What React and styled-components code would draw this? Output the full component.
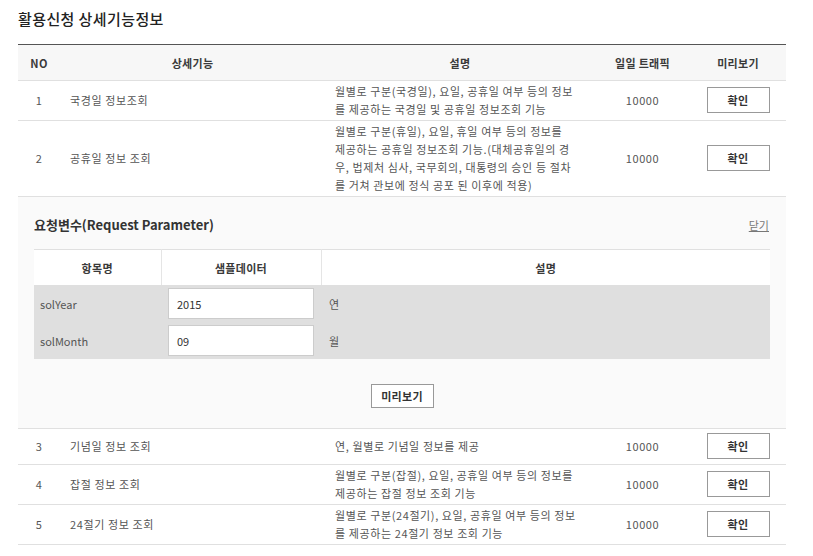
import styled, { createGlobalStyle } from "styled-components";

const GlobalStyle = createGlobalStyle`
  body {
    margin: 0;
    background: #fff;
    font-family: "Noto Sans CJK KR", "Noto Sans", sans-serif;
    color: #555;
  }
`;

const features = [
  {
    no: 1,
    name: "국경일 정보조회",
    desc: [
      "월별로 구분(국경일), 요일, 공휴일 여부 등의 정보",
      "를 제공하는 국경일 및 공휴일 정보조회 기능",
    ],
  },
  {
    no: 2,
    name: "공휴일 정보 조회",
    desc: [
      "월별로 구분(휴일), 요일, 휴일 여부 등의 정보를",
      "제공하는 공휴일 정보조회 기능.(대체공휴일의 경",
      "우, 법제처 심사, 국무회의, 대통령의 승인 등 절차",
      "를 거쳐 관보에 정식 공포 된 이후에 적용)",
    ],
    open: true,
  },
  { no: 3, name: "기념일 정보 조회", desc: ["연, 월별로 기념일 정보를 제공"] },
  {
    no: 4,
    name: "잡절 정보 조회",
    desc: [
      "월별로 구분(잡절), 요일, 공휴일 여부 등의 정보를",
      "제공하는 잡절 정보 조회 기능",
    ],
  },
  {
    no: 5,
    name: "24절기 정보 조회",
    desc: [
      "월별로 구분(24절기), 요일, 공휴일 여부 등의 정보",
      "를 제공하는 24절기 정보 조회 기능",
    ],
  },
];

const params = [
  { name: "solYear", value: "2015", desc: "연" },
  { name: "solMonth", value: "09", desc: "월" },
];

export default function App() {
  return (
    <>
      <GlobalStyle />
      <Page>
        <Title>활용신청 상세기능정보</Title>
        <FeatureTable>
          <colgroup>
            <col style={{ width: 42 }} />
            <col style={{ width: 265 }} />
            <col style={{ width: 270 }} />
            <col style={{ width: 95 }} />
            <col style={{ width: 96 }} />
          </colgroup>
          <thead>
            <tr>
              <HeadCell>NO</HeadCell>
              <HeadCell>상세기능</HeadCell>
              <HeadCell>설명</HeadCell>
              <HeadCell>일일 트래픽</HeadCell>
              <HeadCell>미리보기</HeadCell>
            </tr>
          </thead>
          <tbody>
            {features.map((f) => (
              <FeatureRows key={f.no} feature={f} />
            ))}
          </tbody>
        </FeatureTable>
      </Page>
    </>
  );
}

function FeatureRows({ feature }) {
  return (
    <>
      <tr>
        <Cell $align="center">{feature.no}</Cell>
        <Cell>{feature.name}</Cell>
        <Cell>
          {feature.desc.map((line, i) => (
            <DescLine key={i}>{line}</DescLine>
          ))}
        </Cell>
        <Cell $align="center">10000</Cell>
        <Cell $align="center">
          <Button type="button">확인</Button>
        </Cell>
      </tr>
      {feature.open && (
        <tr>
          <PanelCell colSpan={5}>
            <PanelHead>
              <PanelTitle>요청변수(Request Parameter)</PanelTitle>
              <CloseLink href="#">닫기</CloseLink>
            </PanelHead>
            <ParamTable>
              <colgroup>
                <col style={{ width: 127 }} />
                <col style={{ width: 160 }} />
                <col />
              </colgroup>
              <thead>
                <tr>
                  <ParamHead>항목명</ParamHead>
                  <ParamHead>샘플데이터</ParamHead>
                  <ParamHead>설명</ParamHead>
                </tr>
              </thead>
              <tbody>
                {params.map((p) => (
                  <tr key={p.name}>
                    <ParamCell $pad={6}>{p.name}</ParamCell>
                    <ParamCell $pad={7}>
                      <ParamInput defaultValue={p.value} />
                    </ParamCell>
                    <ParamCell $pad={8}>{p.desc}</ParamCell>
                  </tr>
                ))}
              </tbody>
            </ParamTable>
            <PreviewBar>
              <Button type="button" $h={24}>
                미리보기
              </Button>
            </PreviewBar>
          </PanelCell>
        </tr>
      )}
    </>
  );
}

const Page = styled.div`
  width: 768px;
  padding: 8px 0 10px 18px;
`;

const Title = styled.h1`
  margin: 0 0 14px;
  font-size: 15px;
  line-height: 22px;
  font-weight: 500;
  letter-spacing: 0.4px;
  color: #222;
`;

const FeatureTable = styled.table`
  width: 768px;
  border-collapse: collapse;
  table-layout: fixed;
  border-top: 1px solid #555;
  font-size: 11px;
  letter-spacing: 0.6px;
`;

const HeadCell = styled.th`
  height: 35px;
  padding: 0;
  background: #f7f7f7;
  border-bottom: 1px solid #e0e0e0;
  color: #3a3a3a;
  font-weight: 600;
  letter-spacing: 0.3px;
  text-align: center;
`;

const Cell = styled.td`
  height: 32px;
  padding: 1px 10px 2px;
  border-bottom: 1px solid #e0e0e0;
  line-height: 18px;
  text-align: ${(p) => p.$align || "left"};
  vertical-align: middle;
  color: #555;
`;

const DescLine = styled.div`
  white-space: nowrap;
`;

const Button = styled.button`
  display: inline-block;
  vertical-align: middle;
  width: 63px;
  height: ${(p) => p.$h || 26}px;
  padding: 0;
  border: 1px solid #999;
  background: #fff;
  font-family: inherit;
  font-size: 11px;
  line-height: 16px;
  font-weight: 600;
  letter-spacing: 0.3px;
  color: #333;
  cursor: pointer;
`;

const PanelCell = styled.td`
  padding: 18px 16px 20px;
  background: #fafafa;
  border-bottom: 1px solid #e0e0e0;
  letter-spacing: 0;
`;

const PanelHead = styled.div`
  display: flex;
  justify-content: space-between;
  align-items: center;
  margin-bottom: 14px;
  padding-right: 1px;
`;

const PanelTitle = styled.h2`
  margin: 0;
  font-size: 13px;
  line-height: 20px;
  font-weight: 600;
  color: #333;
`;

const CloseLink = styled.a`
  font-size: 11px;
  color: #777;
  text-decoration: underline;
`;

const ParamTable = styled.table`
  width: 736px;
  border-collapse: collapse;
  table-layout: fixed;
  border-top: 1px solid #e0e0e0;
  font-size: 11px;
`;

const ParamHead = styled.th`
  height: 35px;
  padding: 0;
  background: #fff;
  border-left: 1px solid #e5e5e5;
  color: #3a3a3a;
  font-weight: 600;
  letter-spacing: 0.3px;
  text-align: center;
  &:first-child {
    border-left: none;
  }
`;

const ParamCell = styled.td`
  padding: 3px ${(p) => p.$pad}px 3px;
  background: #dfdfdf;
  color: #555;
  vertical-align: middle;
`;

const ParamInput = styled.input`
  box-sizing: border-box;
  display: block;
  width: 146px;
  height: 31px;
  padding: 0 8px;
  border: 1px solid #ccc;
  background: #fff;
  font-family: inherit;
  font-size: 11px;
  color: #333;
  outline: none;
`;

const PreviewBar = styled.div`
  display: flex;
  justify-content: center;
  margin-top: 25px;
`;
